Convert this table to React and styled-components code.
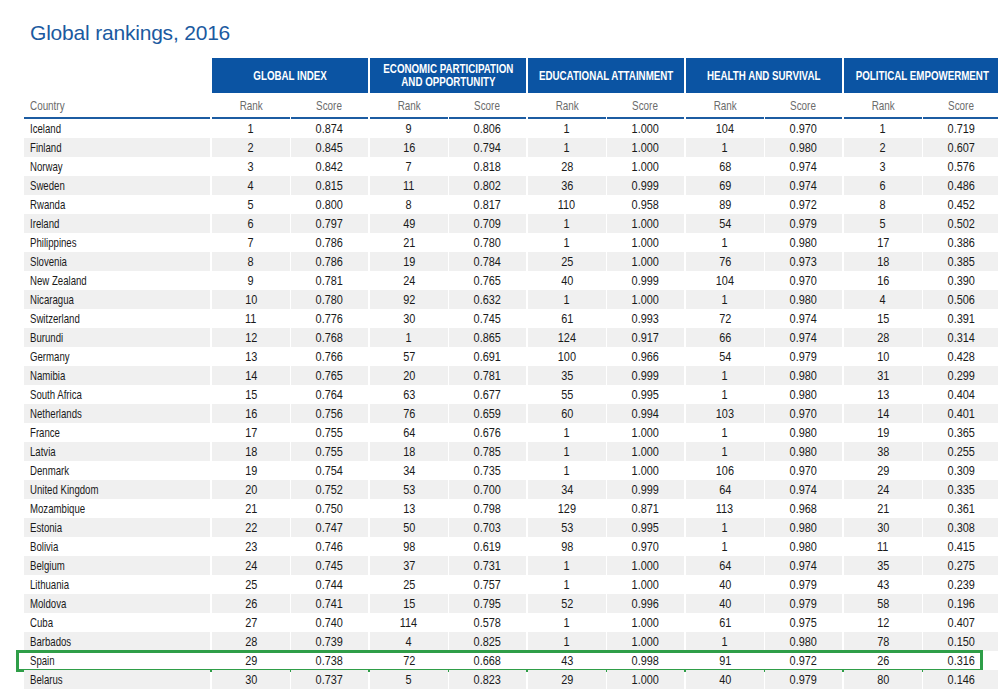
import styled, { createGlobalStyle } from 'styled-components';

const GlobalStyle = createGlobalStyle`
  html, body {
    margin: 0;
    padding: 0;
    background: #ffffff;
  }
  body {
    font-family: 'Liberation Sans', Arial, sans-serif;
    overflow: hidden;
  }
`;

const groups = [
  ['GLOBAL INDEX'],
  ['ECONOMIC PARTICIPATION', 'AND OPPORTUNITY'],
  ['EDUCATIONAL ATTAINMENT'],
  ['HEALTH AND SURVIVAL'],
  ['POLITICAL EMPOWERMENT'],
];

const rows = [
  ['Iceland', 1, '0.874', 9, '0.806', 1, '1.000', 104, '0.970', 1, '0.719'],
  ['Finland', 2, '0.845', 16, '0.794', 1, '1.000', 1, '0.980', 2, '0.607'],
  ['Norway', 3, '0.842', 7, '0.818', 28, '1.000', 68, '0.974', 3, '0.576'],
  ['Sweden', 4, '0.815', 11, '0.802', 36, '0.999', 69, '0.974', 6, '0.486'],
  ['Rwanda', 5, '0.800', 8, '0.817', 110, '0.958', 89, '0.972', 8, '0.452'],
  ['Ireland', 6, '0.797', 49, '0.709', 1, '1.000', 54, '0.979', 5, '0.502'],
  ['Philippines', 7, '0.786', 21, '0.780', 1, '1.000', 1, '0.980', 17, '0.386'],
  ['Slovenia', 8, '0.786', 19, '0.784', 25, '1.000', 76, '0.973', 18, '0.385'],
  ['New Zealand', 9, '0.781', 24, '0.765', 40, '0.999', 104, '0.970', 16, '0.390'],
  ['Nicaragua', 10, '0.780', 92, '0.632', 1, '1.000', 1, '0.980', 4, '0.506'],
  ['Switzerland', 11, '0.776', 30, '0.745', 61, '0.993', 72, '0.974', 15, '0.391'],
  ['Burundi', 12, '0.768', 1, '0.865', 124, '0.917', 66, '0.974', 28, '0.314'],
  ['Germany', 13, '0.766', 57, '0.691', 100, '0.966', 54, '0.979', 10, '0.428'],
  ['Namibia', 14, '0.765', 20, '0.781', 35, '0.999', 1, '0.980', 31, '0.299'],
  ['South Africa', 15, '0.764', 63, '0.677', 55, '0.995', 1, '0.980', 13, '0.404'],
  ['Netherlands', 16, '0.756', 76, '0.659', 60, '0.994', 103, '0.970', 14, '0.401'],
  ['France', 17, '0.755', 64, '0.676', 1, '1.000', 1, '0.980', 19, '0.365'],
  ['Latvia', 18, '0.755', 18, '0.785', 1, '1.000', 1, '0.980', 38, '0.255'],
  ['Denmark', 19, '0.754', 34, '0.735', 1, '1.000', 106, '0.970', 29, '0.309'],
  ['United Kingdom', 20, '0.752', 53, '0.700', 34, '0.999', 64, '0.974', 24, '0.335'],
  ['Mozambique', 21, '0.750', 13, '0.798', 129, '0.871', 113, '0.968', 21, '0.361'],
  ['Estonia', 22, '0.747', 50, '0.703', 53, '0.995', 1, '0.980', 30, '0.308'],
  ['Bolivia', 23, '0.746', 98, '0.619', 98, '0.970', 1, '0.980', 11, '0.415'],
  ['Belgium', 24, '0.745', 37, '0.731', 1, '1.000', 64, '0.974', 35, '0.275'],
  ['Lithuania', 25, '0.744', 25, '0.757', 1, '1.000', 40, '0.979', 43, '0.239'],
  ['Moldova', 26, '0.741', 15, '0.795', 52, '0.996', 40, '0.979', 58, '0.196'],
  ['Cuba', 27, '0.740', 114, '0.578', 1, '1.000', 61, '0.975', 12, '0.407'],
  ['Barbados', 28, '0.739', 4, '0.825', 1, '1.000', 1, '0.980', 78, '0.150'],
  ['Spain', 29, '0.738', 72, '0.668', 43, '0.998', 91, '0.972', 26, '0.316'],
  ['Belarus', 30, '0.737', 5, '0.823', 29, '1.000', 40, '0.979', 80, '0.146'],
];

const Page = styled.div`
  padding: 23px 0 0 24px;
`;

const Title = styled.h1`
  margin: 0 0 15px 6px;
  font-size: 21px;
  line-height: 20px;
  font-weight: normal;
  color: #1b5aa0;
  letter-spacing: -0.2px;
`;

// condensed look: the face is squeezed horizontally
const Narrow = styled.span`
  display: inline-block;
  white-space: nowrap;
  transform: scaleX(${({ s }) => s || 0.76});
  transform-origin: ${({ left }) => (left ? 'left center' : 'center center')};
`;

const Row = styled.div`
  position: relative;
  display: flex;
  gap: 2px;
  height: ${({ h }) => h || 19}px;
`;

const CountryCell = styled.div`
  width: 186px;
  flex: none;
  display: flex;
  align-items: center;
  padding-left: 6px;
  box-sizing: border-box;
  font-size: 13px;
  color: ${({ head }) => (head ? '#6b6b6b' : '#1a1a1a')};
  background: ${({ bg }) => bg};
  border-bottom: ${({ line }) => (line ? '2px solid #1c5ca2' : 'none')};
`;

const Group = styled.div`
  width: 156px;
  flex: none;
  display: grid;
  grid-template-columns: 1fr 1fr;
  gap: 1px;
`;

const GroupHead = styled.div`
  width: 156px;
  flex: none;
  display: flex;
  flex-direction: column;
  align-items: center;
  justify-content: center;
  background: #0b54a3;
  color: #ffffff;
  font-weight: bold;
  font-size: 12.5px;
  line-height: 13px;
  text-align: center;
  padding-top: 1px;
  box-sizing: border-box;
`;

const Cell = styled.div`
  display: flex;
  align-items: center;
  justify-content: center;
  font-size: 13px;
  color: ${({ head }) => (head ? '#6b6b6b' : '#1a1a1a')};
  background: ${({ bg }) => bg};
  border-bottom: ${({ line }) => (line ? '2px solid #1c5ca2' : 'none')};
  box-sizing: border-box;
`;

const Highlight = styled.div`
  position: absolute;
  left: -8px;
  right: 15px;
  top: -1px;
  bottom: -2px;
  border: 3px solid #2f9e48;
  pointer-events: none;
`;

const Spacer = styled.div`
  width: 186px;
  flex: none;
`;

const App = () => (
  <>
    <GlobalStyle />
    <Page>
      <Title>Global rankings, 2016</Title>
      <Row h={35}>
        <Spacer />
        {groups.map((lines, i) => (
          <GroupHead key={i}>
            {lines.map(l => (
              <Narrow key={l} s={0.78}>{l}</Narrow>
            ))}
          </GroupHead>
        ))}
      </Row>
      <Row h={26}>
        <CountryCell head line>
          <Narrow left>Country</Narrow>
        </CountryCell>
        {groups.map((_, i) => (
          <Group key={i}>
            <Cell head line><Narrow>Rank</Narrow></Cell>
            <Cell head line><Narrow>Score</Narrow></Cell>
          </Group>
        ))}
      </Row>
      {rows.map((r, idx) => {
        const bg = idx % 2 === 1 ? '#f0f0f0' : '#ffffff';
        return (
          <Row key={r[0]}>
            <CountryCell bg={bg}>
              <Narrow left s={0.74}>{r[0]}</Narrow>
            </CountryCell>
            {[0, 1, 2, 3, 4].map(g => (
              <Group key={g}>
                <Cell bg={bg}><Narrow s={0.84}>{r[1 + g * 2]}</Narrow></Cell>
                <Cell bg={bg}><Narrow s={0.84}>{r[2 + g * 2]}</Narrow></Cell>
              </Group>
            ))}
            {r[0] === 'Spain' && <Highlight />}
          </Row>
        );
      })}
    </Page>
  </>
);

export default App;
